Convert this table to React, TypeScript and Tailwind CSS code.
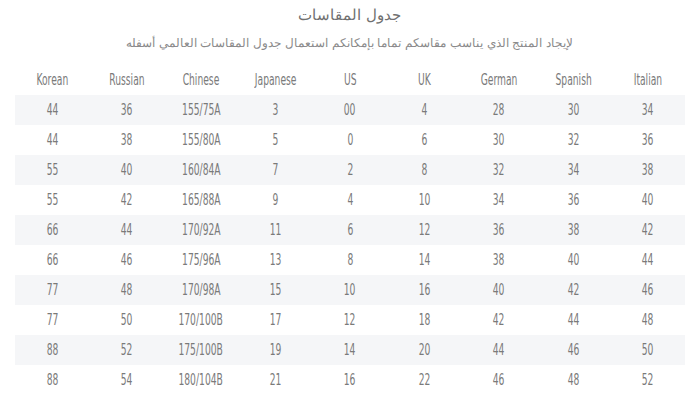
import React from 'react';

const headers = ['Korean', 'Russian', 'Chinese', 'Japanese', 'US', 'UK', 'German', 'Spanish', 'Italian'];

const rows: string[][] = [
  ['44', '36', '155/75A', '3', '00', '4', '28', '30', '34'],
  ['44', '38', '155/80A', '5', '0', '6', '30', '32', '36'],
  ['55', '40', '160/84A', '7', '2', '8', '32', '34', '38'],
  ['55', '42', '165/88A', '9', '4', '10', '34', '36', '40'],
  ['66', '44', '170/92A', '11', '6', '12', '36', '38', '42'],
  ['66', '46', '175/96A', '13', '8', '14', '38', '40', '44'],
  ['77', '48', '170/98A', '15', '10', '16', '40', '42', '46'],
  ['77', '50', '170/100B', '17', '12', '18', '42', '44', '48'],
  ['88', '52', '175/100B', '19', '14', '20', '44', '46', '50'],
  ['88', '54', '180/104B', '21', '16', '22', '46', '48', '52'],
];

// condensed look: no narrow font installed, so squeeze DejaVu Condensed horizontally
const Cell = ({ children }: { children: React.ReactNode }) => (
  <div className="flex justify-center">
    <span className="inline-block scale-x-[0.68] whitespace-nowrap">{children}</span>
  </div>
);

export default function App() {
  return (
    <div className="w-[699px] h-[415px] bg-white overflow-hidden">
      <div dir="rtl" className="flex flex-col items-center font-['DejaVu_Sans',sans-serif]">
        <h2 className="mt-[4px] h-[22px] leading-[22px] text-[15px] font-light text-[#707070]">جدول المقاسات</h2>
        <p className="mt-[6px] h-[22px] leading-[22px] text-[11.8px] font-light text-[#8a8a8a]">
          لإيجاد المنتج الذي يناسب مقاسكم تماما بإمكانكم استعمال جدول المقاسات العالمي أسفله
        </p>
      </div>

      <div className="mx-[15px] mt-[11px] w-[670px] font-['DejaVu_Sans_Condensed',sans-serif] text-[15px] text-[#7a7a7a]">
        <div className="grid grid-cols-9 h-[30px] items-center">
          {headers.map((h) => (
            <Cell key={h}>{h}</Cell>
          ))}
        </div>
        {rows.map((r, i) => (
          <div
            key={i}
            className={`grid grid-cols-9 h-[30px] items-center ${i % 2 === 0 ? 'bg-[#f5f6f8]' : 'bg-white'}`}
          >
            {r.map((c, j) => (
              <Cell key={j}>{c}</Cell>
            ))}
          </div>
        ))}
      </div>
    </div>
  );
}
